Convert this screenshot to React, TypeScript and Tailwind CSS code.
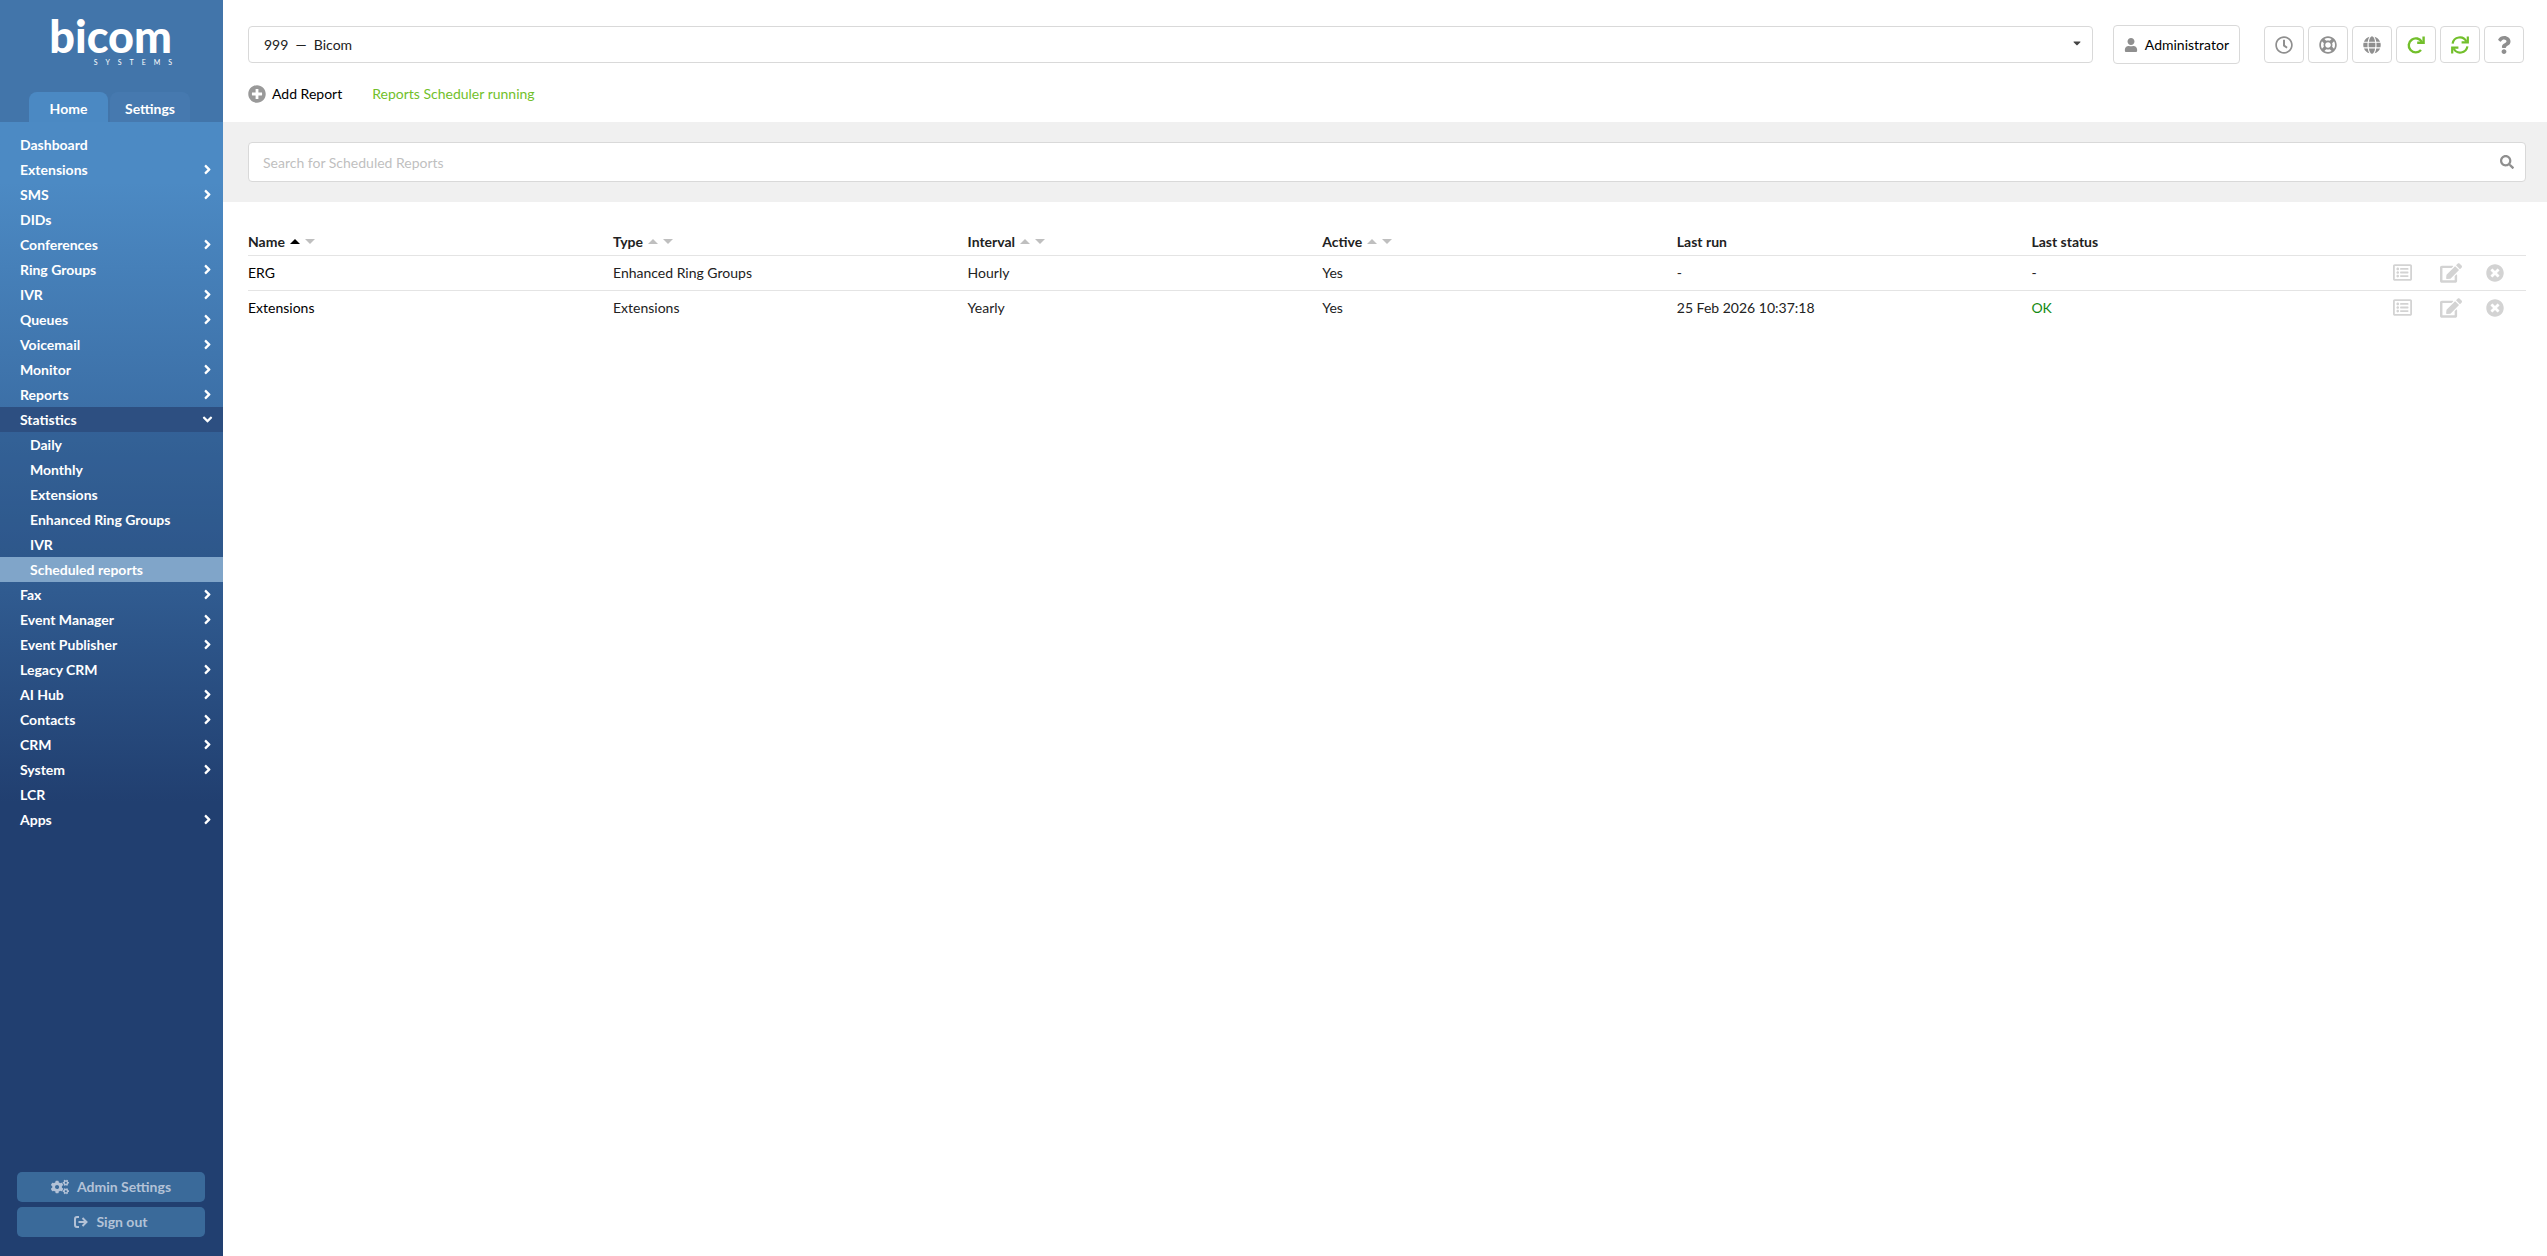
import { ReactNode } from "react";
import {
  FaAngleDown,
  FaAngleRight,
  FaCaretDown,
  FaCogs,
  FaEdit,
  FaGlobe,
  FaPlusCircle,
  FaQuestion,
  FaRegClock,
  FaRegLifeRing,
  FaRegListAlt,
  FaSearch,
  FaTimesCircle,
  FaUser,
} from "react-icons/fa";

type MenuItem = { label: string; leaf?: boolean; children?: string[] };

const menu: MenuItem[] = [
  { label: "Dashboard", leaf: true },
  { label: "Extensions" },
  { label: "SMS" },
  { label: "DIDs", leaf: true },
  { label: "Conferences" },
  { label: "Ring Groups" },
  { label: "IVR" },
  { label: "Queues" },
  { label: "Voicemail" },
  { label: "Monitor" },
  { label: "Reports" },
  {
    label: "Statistics",
    children: ["Daily", "Monthly", "Extensions", "Enhanced Ring Groups", "IVR", "Scheduled reports"],
  },
  { label: "Fax" },
  { label: "Event Manager" },
  { label: "Event Publisher" },
  { label: "Legacy CRM" },
  { label: "AI Hub" },
  { label: "Contacts" },
  { label: "CRM" },
  { label: "System" },
  { label: "LCR", leaf: true },
  { label: "Apps" },
];

const columns = [
  { label: "Name", sortable: true, sorted: true },
  { label: "Type", sortable: true },
  { label: "Interval", sortable: true },
  { label: "Active", sortable: true },
  { label: "Last run" },
  { label: "Last status" },
];

const reports = [
  { name: "ERG", type: "Enhanced Ring Groups", interval: "Hourly", active: "Yes", lastRun: "-", status: "-" },
  {
    name: "Extensions",
    type: "Extensions",
    interval: "Yearly",
    active: "Yes",
    lastRun: "25 Feb 2026 10:37:18",
    status: "OK",
  },
];

function SignOutIcon() {
  return (
    <svg width="14" height="12" viewBox="0 0 14 12" fill="none" stroke="currentColor" strokeWidth="2">
      <path d="M5 1H3a2 2 0 0 0-2 2v6a2 2 0 0 0 2 2h2" />
      <path d="M4.5 6H12M8.5 2l4 4-4 4" />
    </svg>
  );
}

function RedoIcon() {
  return (
    <svg width="18" height="18" viewBox="0 0 18 18" fill="none" stroke="currentColor" strokeWidth="2.4">
      <path d="M14.9 6A7 7 0 1 0 14 14" />
      <path d="M16.6 0.6v6.2h-6.4" />
    </svg>
  );
}

function SyncIcon() {
  return (
    <svg width="18" height="18" viewBox="0 0 18 18" fill="none" stroke="currentColor" strokeWidth="2.2">
      <path d="M1.6 7.6A7.3 7.3 0 0 1 15.4 5.6" />
      <path d="M16.8 0.4v6h-6.2" />
      <path d="M16.4 10.4A7.3 7.3 0 0 1 2.6 12.4" />
      <path d="M1.2 17.6v-6h6.2" />
    </svg>
  );
}

function ToolButton({ label, green, children }: { label: string; green?: boolean; children: ReactNode }) {
  return (
    <button
      aria-label={label}
      className={`flex h-[37px] w-10 items-center justify-center rounded border border-[#d9d9d9] bg-white text-[18px] ${
        green ? "text-[#72bf2b]" : "text-[#8f8f8f]"
      }`}
    >
      {children}
    </button>
  );
}

function SortArrows({ sorted }: { sorted?: boolean }) {
  return (
    <span className="flex gap-[5px]">
      <svg width="10" height="5" viewBox="0 0 10 5" className={sorted ? "fill-black" : "fill-[#bfbfbf]"}>
        <path d="M0 5L5 0l5 5z" />
      </svg>
      <svg width="10" height="5" viewBox="0 0 10 5" className="fill-[#bfbfbf]">
        <path d="M0 0l5 5 5-5z" />
      </svg>
    </span>
  );
}

function Sidebar() {
  return (
    <aside className="flex w-[223px] shrink-0 flex-col bg-[#213f70] font-bold text-white">
      <div className="flex h-[122px] flex-col justify-between bg-[#4275aa]">
        <div className="flex flex-col items-end pr-[51px] pt-[14px]">
          <div className="text-[45px] font-black leading-[44px]">bicom</div>
          <div className="-mr-2 text-[7px] font-normal leading-[8px] tracking-[8px]">SYSTEMS</div>
        </div>
        <div className="flex gap-[2px] pl-[29px]">
          <a href="#home" className="flex h-[30px] w-[79px] items-center justify-center rounded-t-lg bg-[#4b89c3] pt-1">
            Home
          </a>
          <a href="#settings" className="flex h-[30px] w-20 items-center justify-center rounded-t-lg bg-[#4679af] pt-1">
            Settings
          </a>
        </div>
      </div>
      <nav className="flex grow flex-col bg-linear-to-b from-[#4c8ac4] from-[60px] via-[#305b90] via-[470px] to-[#213f70] to-[680px] pt-[10px]">
        {menu.map((item) => (
          <div key={item.label}>
            <a
              href="#"
              className={`flex h-[25px] items-center justify-between pl-5 pr-2 ${item.children ? "bg-[#2d4f81]" : ""}`}
            >
              {item.label}
              {!item.leaf && (
                <span className="flex w-4 justify-center">
                  {item.children ? <FaAngleDown size={15} /> : <FaAngleRight size={15} />}
                </span>
              )}
            </a>
            {item.children && (
              <div className="bg-[#213f70]/25">
                {item.children.map((child) => (
                  <a
                    key={child}
                    href="#"
                    className={`flex h-[25px] items-center pl-[30px] ${
                      child === "Scheduled reports" ? "bg-[#80a5c9]" : ""
                    }`}
                  >
                    {child}
                  </a>
                ))}
              </div>
            )}
          </div>
        ))}
      </nav>
      <div className="flex flex-col gap-[5px] pb-[19px] pl-[17px] pr-[18px] text-[#b3c2d7]">
        <button className="flex h-[30px] items-center justify-center gap-2 rounded-[5px] bg-[#3a6a9a]">
          <FaCogs size={18} />
          Admin Settings
        </button>
        <button className="flex h-[30px] items-center justify-center gap-2 rounded-[5px] bg-[#3a6a9a]">
          <SignOutIcon />
          Sign out
        </button>
      </div>
    </aside>
  );
}

function TopBar() {
  return (
    <header className="flex items-center pl-[25px] pr-[23px] pt-[25px]">
      <div className="relative grow">
        <select
          aria-label="Tenant"
          className="h-[37px] w-full appearance-none rounded border border-[#d9d9d9] bg-white px-[15px] text-[#222]"
        >
          <option>999&nbsp; — &nbsp;Bicom</option>
        </select>
        <FaCaretDown size={12} className="pointer-events-none absolute right-[10px] top-[11px] text-[#444]" />
      </div>
      <button className="ml-5 flex h-[39px] items-center gap-[7px] rounded border border-[#d9d9d9] px-[10px] text-black">
        <FaUser size={14} className="text-[#8f8f8f]" />
        Administrator
      </button>
      <div className="ml-6 flex gap-1">
        <ToolButton label="Time">
          <FaRegClock />
        </ToolButton>
        <ToolButton label="Support">
          <FaRegLifeRing />
        </ToolButton>
        <ToolButton label="Language">
          <FaGlobe />
        </ToolButton>
        <ToolButton label="Reload" green>
          <RedoIcon />
        </ToolButton>
        <ToolButton label="Sync" green>
          <SyncIcon />
        </ToolButton>
        <ToolButton label="Help">
          <FaQuestion />
        </ToolButton>
      </div>
    </header>
  );
}

function ReportsTable() {
  return (
    <table className="w-full table-fixed text-left text-[#222]">
      <colgroup>
        <col className="w-[365px]" />
        <col span={5} />
        <col className="w-[140px]" />
      </colgroup>
      <thead>
        <tr className="h-[26px] border-b border-[#e4e4e4]">
          {columns.map((col) => (
            <th key={col.label} className="font-bold">
              <span className="flex items-center gap-[5px]">
                {col.label}
                {col.sortable && <SortArrows sorted={col.sorted} />}
              </span>
            </th>
          ))}
          <th></th>
        </tr>
      </thead>
      <tbody>
        {reports.map((report) => (
          <tr key={report.name} className="h-[35px] border-b border-[#e4e4e4] last:border-0">
            <td>
              <a href="#" className="text-black">
                {report.name}
              </a>
            </td>
            <td>{report.type}</td>
            <td>{report.interval}</td>
            <td>{report.active}</td>
            <td>{report.lastRun}</td>
            <td className={report.status === "OK" ? "text-[#138a13]" : ""}>{report.status}</td>
            <td>
              <div className="flex items-center justify-end gap-6 pr-[22px] text-[#d3d3d3]">
                <button aria-label="Details" className="mr-1">
                  <FaRegListAlt size={19} />
                </button>
                <button aria-label="Edit">
                  <FaEdit size={22} />
                </button>
                <button aria-label="Delete">
                  <FaTimesCircle size={18} />
                </button>
              </div>
            </td>
          </tr>
        ))}
      </tbody>
    </table>
  );
}

export default function App() {
  return (
    <div className="flex min-h-screen bg-white font-[Lato,sans-serif] text-[14px] leading-5">
      <Sidebar />
      <main className="flex min-w-0 grow flex-col">
        <TopBar />
        <div className="flex h-[58px] items-center gap-[30px] pl-[25px] pt-px">
          <button className="flex items-center gap-[6px] text-black">
            <FaPlusCircle size={18} className="text-[#999]" />
            Add Report
          </button>
          <div className="text-[#72bf2b]">Reports Scheduler running</div>
        </div>
        <div className="bg-[#f0f0f0] px-[25px] py-5 pr-[21px]">
          <div className="flex h-10 items-center rounded border border-[#d9d9d9] bg-white pl-[14px] pr-[11px]">
            <input
              type="text"
              aria-label="Search for Scheduled Reports"
              placeholder="Search for Scheduled Reports"
              className="min-w-0 grow pt-px outline-none placeholder:text-[#bfbfbf]"
            />
            <button aria-label="Search" className="text-[#8f8f8f]">
              <FaSearch size={14} />
            </button>
          </div>
        </div>
        <div className="pl-[25px] pr-[21px] pt-[27px]">
          <ReportsTable />
        </div>
      </main>
    </div>
  );
}
